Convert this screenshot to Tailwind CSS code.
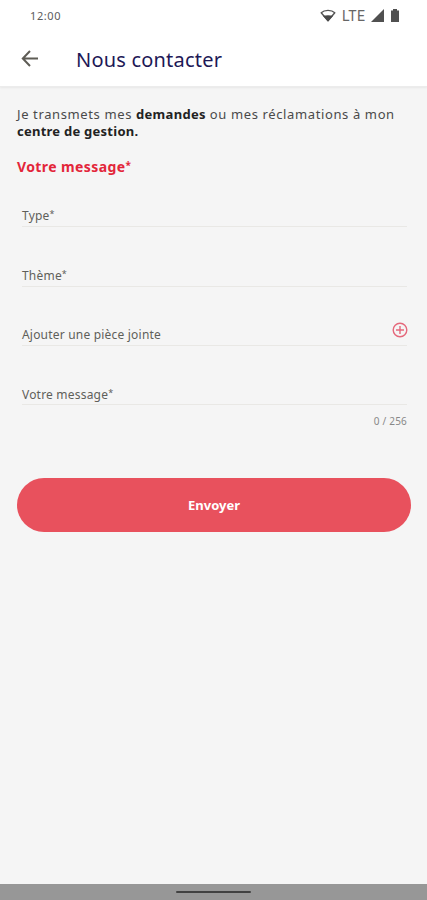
<!DOCTYPE html>
<html lang="fr">
<head>
  <meta charset="utf-8">
  <title>Nous contacter</title>
  <meta name="viewport" content="width=device-width, initial-scale=1">
  <script src="https://cdn.jsdelivr.net/npm/@tailwindcss/browser@4"></script>
</head>
<body class="flex flex-col w-full h-screen overflow-hidden bg-[#f5f5f5] font-['Noto_Sans',sans-serif] text-[#4a4a4a]">
  <header class="h-[87px] shrink-0 bg-white border-b border-[#ececec] shadow-[0_1px_2px_rgba(0,0,0,0.06)]">
    <!-- status bar -->
    <div class="flex items-center justify-between h-[31px] pl-[30px] pr-7 text-[#5c5c5c]">
      <span class="text-[11px] leading-4 tracking-[0.6px]">12:00</span>
      <div class="flex items-center">
        <svg class="w-4 h-[13px]" viewBox="0 0 16 13">
          <path d="M1.2 3.8C4.5.6 11.5.6 14.8 3.8L8 11.8Z" fill="none" stroke="#555" stroke-width="1.4" stroke-linejoin="round"/>
          <path d="M2.8 6.8C6 6 10 6 13.2 6.8L8 12.5Z" fill="#484848"/>
        </svg>
        <span class="ml-[6px] w-[25px] font-[Roboto,sans-serif] text-[14px] leading-4 tracking-[0.5px] text-[#666]">LTE</span>
        <svg class="ml-1 w-[13px] h-[13px]" viewBox="0 0 13 13"><path d="M0 13L13 0V13Z" fill="#505050"/></svg>
        <svg class="ml-[7px] w-[8px] h-[13px]" viewBox="0 0 8 13"><path d="M2 0H6V1.5H8V13H0V1.5H2Z" fill="#505050"/></svg>
      </div>
    </div>
    <div class="flex items-center h-[55px] pl-[21px]">
      <svg class="w-[17px] h-[17px]" viewBox="0 0 17 17" fill="none" stroke="#5e5c55" stroke-width="2">
        <path d="M9 1L1.8 8.5L9 16M2 8.5H17"/>
      </svg>
      <h1 class="ml-[38px] pt-[2px] text-xl leading-7 tracking-[0.2px] whitespace-nowrap text-[#1d1856]">Nous contacter</h1>
    </div>
  </header>

  <main class="flex-1 px-[17px] pt-[19px]">
    <p class="text-[13px] leading-[17px] tracking-[0.62px] whitespace-nowrap">
      Je transmets mes <b class="tracking-[0.3px] text-[#222]">demandes</b> ou mes réclamations à mon<br>
      <b class="tracking-[0.25px] text-[#222]">centre de gestion.</b>
    </p>
    <h2 class="mt-[17px] h-5 text-sm leading-5 font-bold tracking-[0.4px] text-[#e3263a]">Votre message<span class="text-[10px] leading-none align-[3px]">*</span></h2>

    <form class="pl-[5px] pr-[3px] text-xs leading-4 tracking-[0.2px] text-[#5f5f5a]">
      <div class="h-[50px] pt-[31px] border-b border-[#e9e8e5]">Type<span class="text-[9px] leading-none align-[3px]">*</span></div>
      <div class="h-[60px] pt-[41px] border-b border-[#e9e8e5]">Thème<span class="text-[9px] leading-none align-[3px]">*</span></div>
      <div class="flex items-end justify-between h-[59px] pb-[2px] border-b border-[#e9e8e5]">
        <span>Ajouter une pièce jointe</span>
        <svg class="w-4 h-4 mb-[5px] -mr-[1px]" viewBox="0 0 16 16" fill="none" stroke="#e5687b" stroke-width="1.4">
          <circle cx="8" cy="8" r="6.8"/>
          <path d="M8 4V12M4 8H12"/>
        </svg>
      </div>
      <div class="h-[59px] pt-[41px] border-b border-[#e9e8e5]">Votre message<span class="text-[9px] leading-none align-[3px]">*</span></div>
      <div class="pt-2 text-right text-[10px] leading-4 text-[#888]">0 / 256</div>
    </form>

    <button class="block mt-[49px] w-[394px] h-[54px] pt-[2px] rounded-full bg-[#e8515d] text-[13px] font-bold text-white">Envoyer</button>
  </main>

  <!-- gesture bar -->
  <div class="flex justify-center h-4 shrink-0 pt-[7px] bg-[#979797]">
    <div class="w-[75px] h-[2px] rounded-full bg-[#424242]"></div>
  </div>
</body>
</html>
